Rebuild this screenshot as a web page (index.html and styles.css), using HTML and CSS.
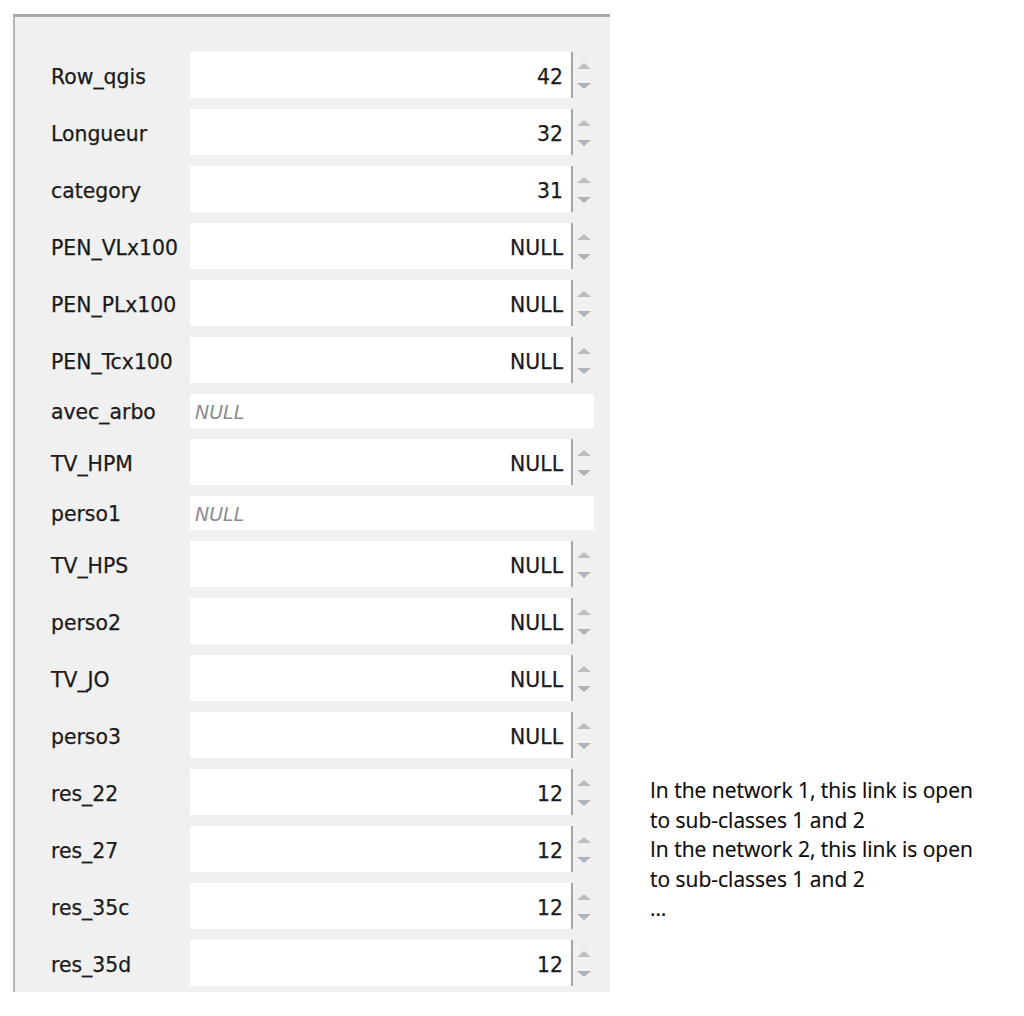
FILE: index.html
```html
<!DOCTYPE html>
<html>
<head>
<meta charset="utf-8">
<link rel="stylesheet" href="styles.css">
</head>
<body>
<div class="page">
  <div class="panel">
    <div class="row"><span class="label">Row_qgis</span><div class="spin"><span class="field">42</span><span class="arrows"><span class="up"></span><span class="down"></span></span></div></div>
    <div class="row"><span class="label">Longueur</span><div class="spin"><span class="field">32</span><span class="arrows"><span class="up"></span><span class="down"></span></span></div></div>
    <div class="row"><span class="label">category</span><div class="spin"><span class="field">31</span><span class="arrows"><span class="up"></span><span class="down"></span></span></div></div>
    <div class="row"><span class="label">PEN_VLx100</span><div class="spin"><span class="field">NULL</span><span class="arrows"><span class="up"></span><span class="down"></span></span></div></div>
    <div class="row"><span class="label">PEN_PLx100</span><div class="spin"><span class="field">NULL</span><span class="arrows"><span class="up"></span><span class="down"></span></span></div></div>
    <div class="row"><span class="label">PEN_Tcx100</span><div class="spin"><span class="field">NULL</span><span class="arrows"><span class="up"></span><span class="down"></span></span></div></div>
    <div class="row short"><span class="label">avec_arbo</span><div class="text"><span class="null">NULL</span></div></div>
    <div class="row"><span class="label">TV_HPM</span><div class="spin"><span class="field">NULL</span><span class="arrows"><span class="up"></span><span class="down"></span></span></div></div>
    <div class="row short"><span class="label">perso1</span><div class="text"><span class="null">NULL</span></div></div>
    <div class="row"><span class="label">TV_HPS</span><div class="spin"><span class="field">NULL</span><span class="arrows"><span class="up"></span><span class="down"></span></span></div></div>
    <div class="row"><span class="label">perso2</span><div class="spin"><span class="field">NULL</span><span class="arrows"><span class="up"></span><span class="down"></span></span></div></div>
    <div class="row"><span class="label">TV_JO</span><div class="spin"><span class="field">NULL</span><span class="arrows"><span class="up"></span><span class="down"></span></span></div></div>
    <div class="row"><span class="label">perso3</span><div class="spin"><span class="field">NULL</span><span class="arrows"><span class="up"></span><span class="down"></span></span></div></div>
    <div class="row"><span class="label">res_22</span><div class="spin"><span class="field">12</span><span class="arrows"><span class="up"></span><span class="down"></span></span></div></div>
    <div class="row"><span class="label">res_27</span><div class="spin"><span class="field">12</span><span class="arrows"><span class="up"></span><span class="down"></span></span></div></div>
    <div class="row"><span class="label">res_35c</span><div class="spin"><span class="field">12</span><span class="arrows"><span class="up"></span><span class="down"></span></span></div></div>
    <div class="row"><span class="label">res_35d</span><div class="spin"><span class="field">12</span><span class="arrows"><span class="up"></span><span class="down"></span></span></div></div>
  </div>
  <div class="note">
    <p>In the network 1, this link is open</p>
    <p>to sub-classes 1 and 2</p>
    <p>In the network 2, this link is open</p>
    <p>to sub-classes 1 and 2</p>
    <p>…</p>
  </div>
</div>
</body>
</html>
```
FILE: styles.css
```css
html, body {
  margin: 0;
  padding: 0;
  background: #ffffff;
}

.page {
  display: flex;
  align-items: flex-start;
  padding: 14px 0 0 13px;
}

.panel {
  width: 543px;
  flex: none;
  background: #f0f0f0;
  border-top: 3px solid #a9a9a9;
  border-left: 2px solid #b4b4b4;
  padding: 35px 16px 6px 36px;
  display: flex;
  flex-direction: column;
  gap: 11px;
  font-family: "DejaVu Sans", sans-serif;
  font-size: 20.4px;
  color: #1a1a1a;
  -webkit-text-stroke: 0.25px #1a1a1a;
}

.row {
  display: flex;
  align-items: center;
  height: 46px;
}

.row.short {
  height: 34px;
}

.label {
  width: 139px;
  flex: none;
  white-space: nowrap;
  padding-top: 3px;
}

.row.short .label {
  padding-top: 1px;
}

.spin {
  display: flex;
  width: 404px;
  height: 100%;
}

.field {
  flex: 1;
  background: #ffffff;
  border-right: 2px solid #a4a4a4;
  display: flex;
  align-items: center;
  justify-content: flex-end;
  padding: 3px 8px 0 0;
}

.arrows {
  width: 21px;
  flex: none;
  display: flex;
  flex-direction: column;
  align-items: center;
  padding-top: 11px;
  gap: 14px;
}

.up {
  width: 0;
  height: 0;
  border-left: 7px solid transparent;
  border-right: 7px solid transparent;
  border-bottom: 6px solid #bdbdbd;
}

.down {
  width: 0;
  height: 0;
  border-left: 7px solid transparent;
  border-right: 7px solid transparent;
  border-top: 6px solid #adb3ba;
}

.text {
  width: 404px;
  height: 100%;
  background: #ffffff;
  display: flex;
  align-items: center;
  padding: 1px 0 0 5px;
  box-sizing: border-box;
}

.null {
  font-style: italic;
  color: #8c8c8c;
  font-size: 19px;
  -webkit-text-stroke: 0;
}

.note {
  margin: 762px 0 0 40px;
  font-family: "Open Sans", sans-serif;
  font-size: 21px;
  line-height: 29.5px;
  color: #0a0a0a;
  -webkit-text-stroke: 0.2px #0a0a0a;
}

.note p {
  margin: 0;
  white-space: nowrap;
}
```
